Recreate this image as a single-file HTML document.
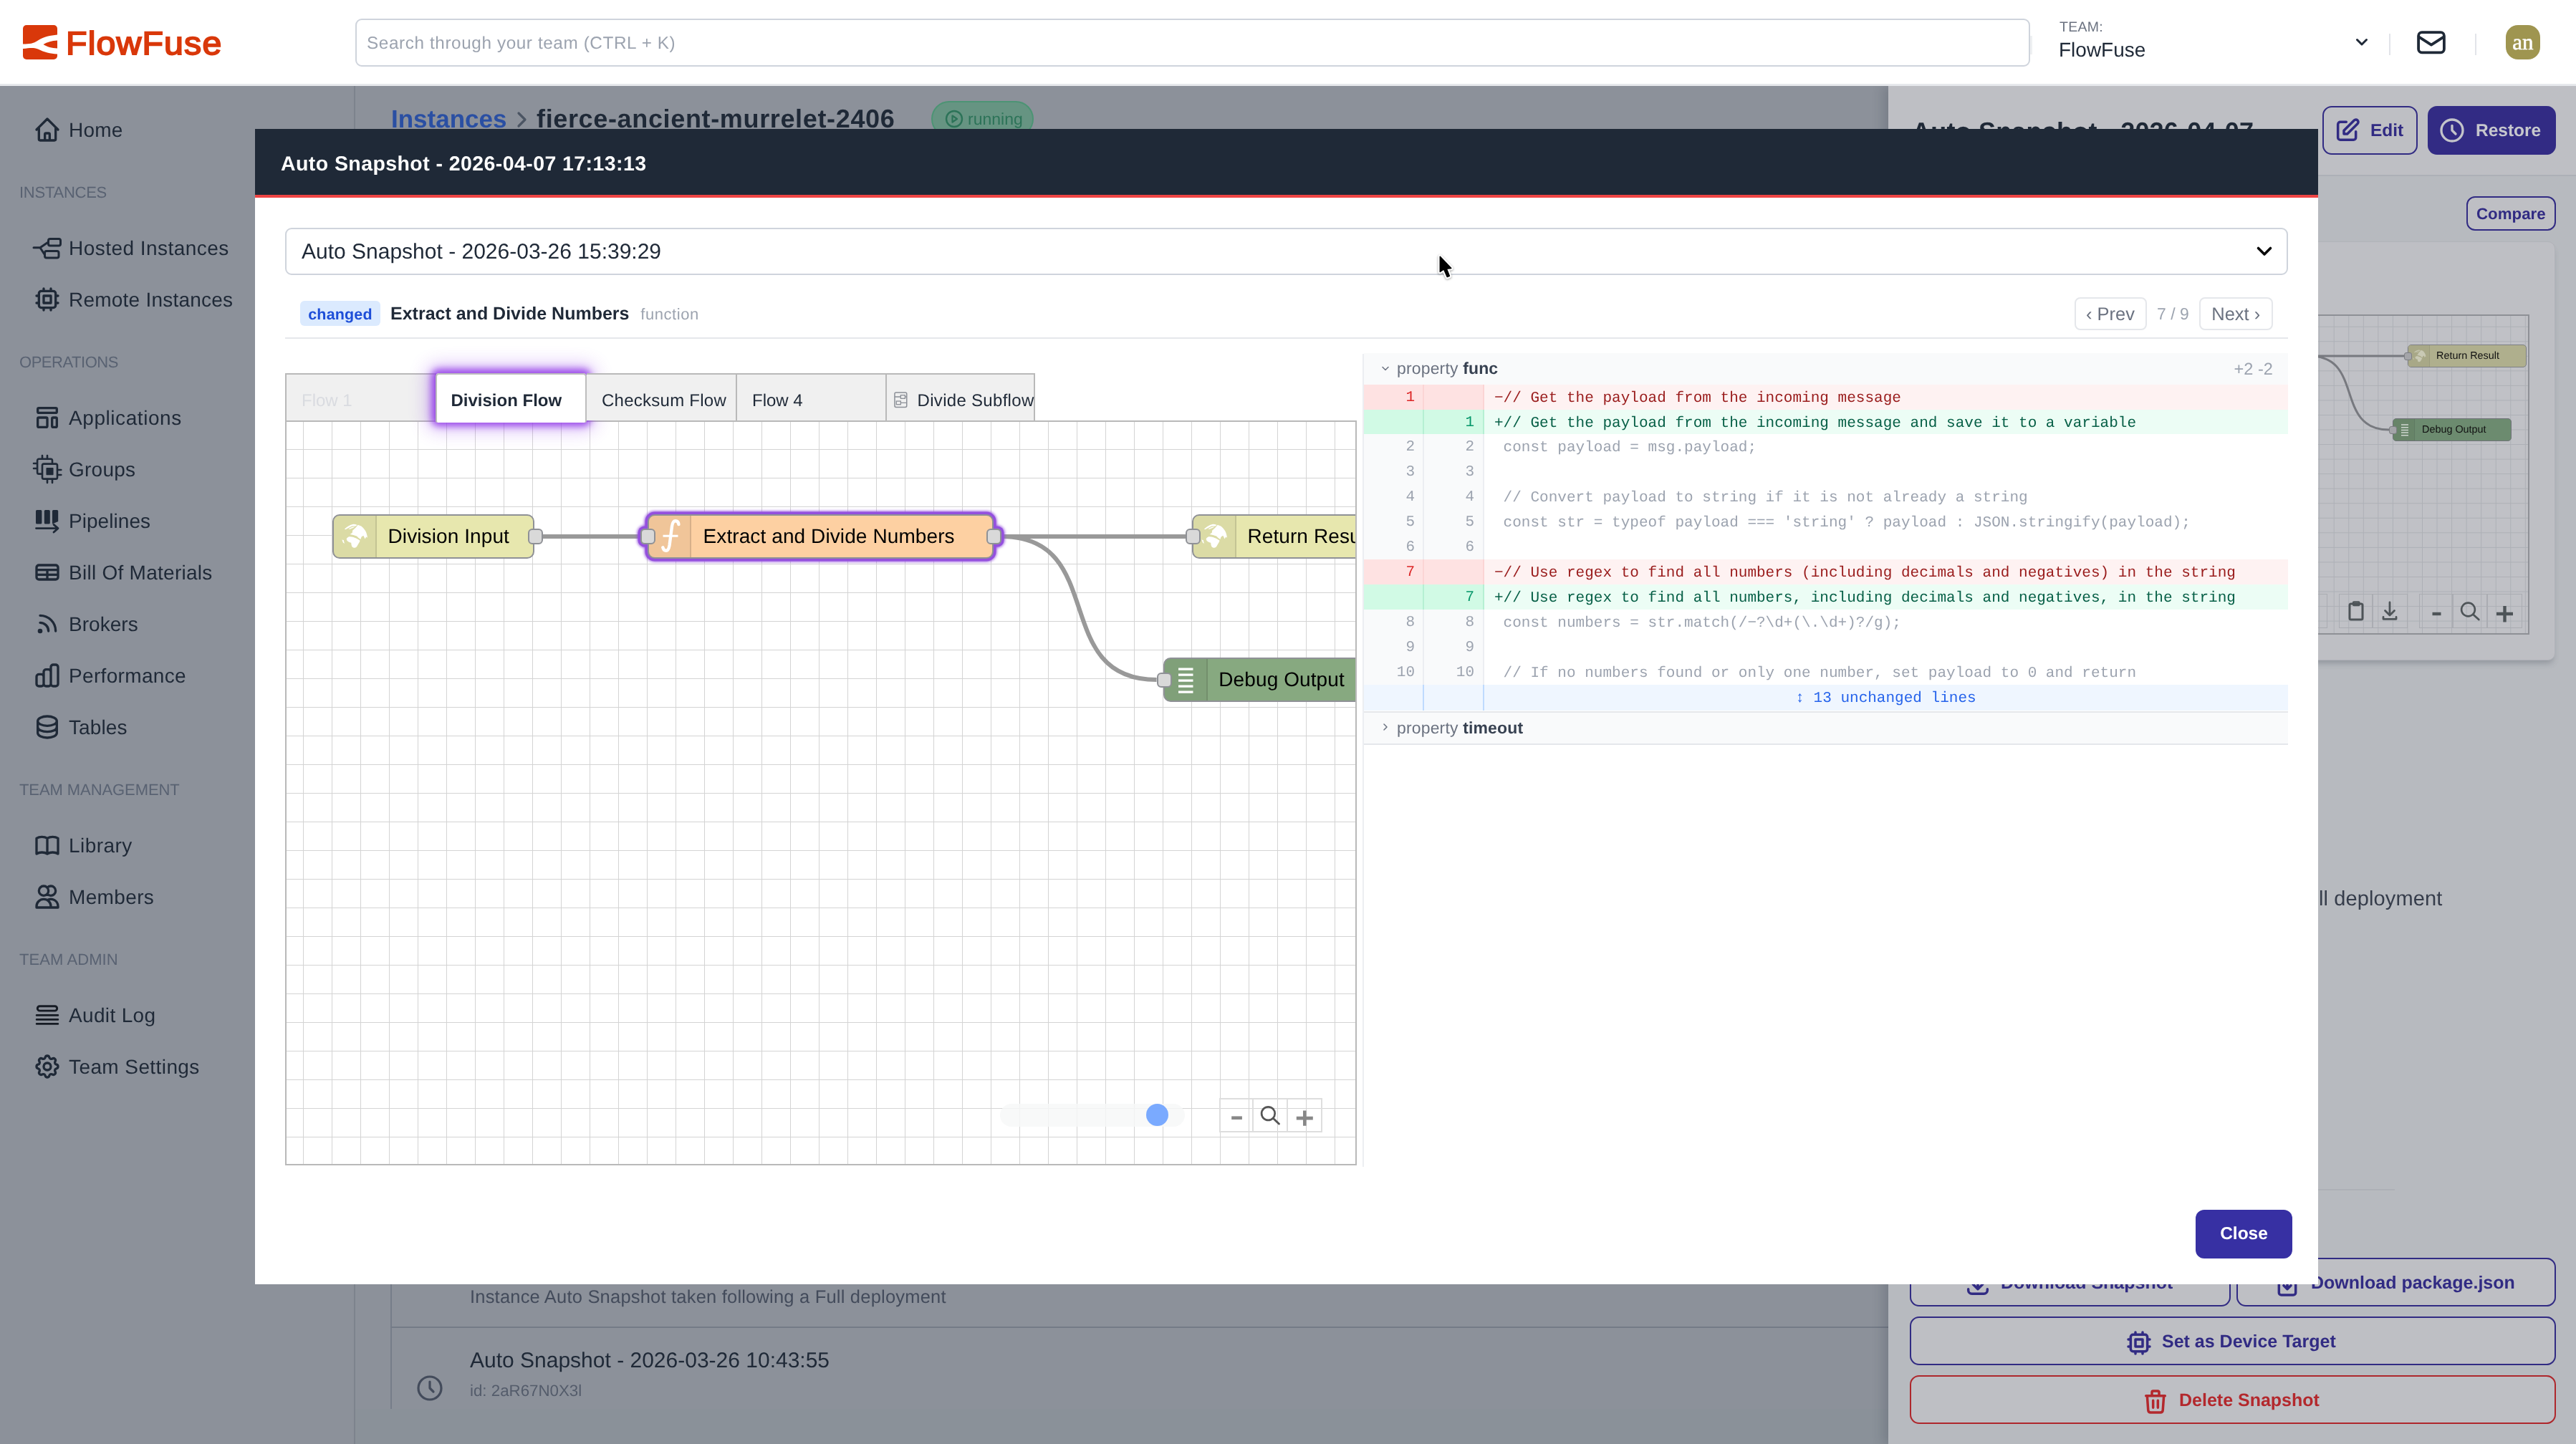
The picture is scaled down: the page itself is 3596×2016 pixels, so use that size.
<!DOCTYPE html>
<html>
<head>
<meta charset="utf-8">
<title>FlowFuse</title>
<style>
*{box-sizing:border-box;margin:0;padding:0}
html,body{width:3596px;height:2016px;overflow:hidden;background:#8c919a;text-rendering:geometricPrecision;font-family:"Liberation Sans",sans-serif;}
.abs{position:absolute}
.t{position:absolute;white-space:nowrap;line-height:1}
.b{font-weight:700}
svg{position:absolute;overflow:visible}
.mono{font-family:"Liberation Mono",monospace}
/* header */
#hdr{position:absolute;left:0;top:0;width:3596px;height:120px;background:#fff;border-bottom:3px solid #e6e8ec}
#search{position:absolute;left:496px;top:26px;width:2338px;height:67px;border:2px solid #cfd4dc;border-radius:9px;background:#fff}
/* sidebar */
#side{position:absolute;left:0;top:120px;width:496px;height:1896px;background:#8c919a;border-right:2px solid #7d838d}
.nav{position:absolute;left:96px;font-size:28px;color:#1f2937;white-space:nowrap;line-height:40px;height:40px;margin-top:.8px;letter-spacing:.3px}
.lbl{position:absolute;left:27px;font-size:22px;color:#596272;white-space:nowrap;line-height:30px;height:30px;margin-top:.5px;letter-spacing:0}
.ico{position:absolute;left:46px;width:40px;height:40px;fill:none;stroke:#1f2937;stroke-width:2;stroke-linecap:round;stroke-linejoin:round}
/* modal */
#modal{position:absolute;left:356px;top:180px;width:2880px;height:1613px;background:#fff;overflow:hidden}
#mhead{position:absolute;left:0;top:0;width:2880px;height:96px;background:#1f2937;border-bottom:4px solid #ef4444}
.tab{position:absolute;top:0;height:66px;background:#f0f0f0;border:2px solid #b9b9b9;border-left:none;border-bottom:none;font-size:24px;color:#1f2937;line-height:66px;padding-top:4px;white-space:nowrap}
.node{position:absolute;height:62px;border:2px solid #8f9196;border-radius:10px;overflow:hidden}
.node .ic{position:absolute;left:0;top:0;width:59.5px;height:58px;background:rgba(0,0,0,.05);border-right:2px solid rgba(0,0,0,.1)}
.node .lb{position:absolute;left:75px;top:0;line-height:58px;font-size:28px;color:#000;white-space:nowrap;letter-spacing:.1px}
.port{position:absolute;width:21.4px;height:21.4px;border:2px solid #8f9196;border-radius:6px;background:#d9d9d9}
.row{position:absolute;left:0;width:1290px;height:35px}
.row .n1{position:absolute;left:0;top:0;width:84px;height:100%;border-right:2px solid rgba(0,0,0,.05)}
.row .n2{position:absolute;left:84px;top:0;width:84.4px;height:100%;border-right:2px solid rgba(0,0,0,.05)}
.row .num{position:absolute;top:0;font-family:"Liberation Mono",monospace;font-size:21px;line-height:38px;text-align:right;white-space:pre}
.row .code{position:absolute;left:182px;top:0;font-family:"Liberation Mono",monospace;font-size:21.04px;line-height:38px;white-space:pre}
</style>
</head>
<body><div id="root" style="position:absolute;left:0;top:0;width:3596px;height:2016px;will-change:transform">
<!-- ======= dimmed main page content ======= -->
<div class="abs" style="left:0;top:120px;width:3596px;height:1896px;background:#8c919a"></div>
<!-- breadcrumb -->
<div class="t b" style="left:546px;top:149px;font-size:35px;color:#2a4fa3">Instances</div>
<svg style="left:718px;top:153px;width:22px;height:28px" viewBox="0 0 22 28"><path d="M6 5 L15 14 L6 23" fill="none" stroke="#4b5563" stroke-width="3.2" stroke-linecap="round" stroke-linejoin="round"/></svg>
<div class="t b" style="left:749px;top:148px;font-size:36px;letter-spacing:.65px;color:#1f2937">fierce-ancient-murrelet-2406</div>
<!-- running badge -->
<div class="abs" style="left:1300px;top:141px;width:143px;height:50px;border:2px solid #4c9474;border-radius:25px;background:#669482"></div>
<svg style="left:1318px;top:152px;width:28px;height:28px" viewBox="0 0 28 28"><circle cx="14" cy="14" r="11" fill="none" stroke="#2c7358" stroke-width="2.4"/><path d="M11.5 9.5 L18 14 L11.5 18.5 Z" fill="none" stroke="#2c7358" stroke-width="2.2" stroke-linejoin="round"/></svg>
<div class="t" style="left:1351px;top:155px;font-size:23px;color:#2c7358">running</div>

<!-- snapshot list under the modal -->
<div class="abs" style="left:545.2px;top:1700px;width:1.6px;height:267px;background:#767d89"></div>
<div class="t" style="left:656px;top:1799px;font-size:25.5px;letter-spacing:.2px;color:#434b5b">Instance Auto Snapshot taken following a Full deployment</div>
<div class="abs" style="left:545px;top:1851.5px;width:2091px;height:2px;background:#747b87"></div>
<div class="t" style="left:656px;top:1885px;font-size:30px;color:#1f2937">Auto Snapshot - 2026-03-26 10:43:55</div>
<div class="t" style="left:656px;top:1931px;font-size:22.3px;color:#545c6b">id: 2aR67N0X3l</div>
<svg style="left:581px;top:1919px;width:38px;height:38px" viewBox="0 0 38 38"><circle cx="19" cy="19" r="16" fill="none" stroke="#434b5b" stroke-width="3.2"/><path d="M19 10 V19 L24 24" fill="none" stroke="#434b5b" stroke-width="3.2" stroke-linecap="round" stroke-linejoin="round"/></svg>
<div class="abs" style="left:496px;top:1967px;width:2140px;height:49px;background:#8a9199"></div>
<!-- ======= header ======= -->
<div id="hdr" style="z-index:5">
  <!-- logo -->
  <svg style="left:32px;top:35px;width:48px;height:48px" viewBox="0 0 48 48">
    <rect x="0" y="0" width="48" height="48" rx="5" fill="#d9380a"/>
    <path d="M0 26.5 C10 26.5 14 26 21 21.5 C30 16 38 14.5 48 13.5 L48 21.5 C40 22 34 23.5 28.5 27 C34 30.5 40 32 48 32.5 L48 40.5 C38 40 30 38 21 33.5 C14 31 10 32 0 33 Z" fill="#fff"/>
    <path d="M48 22.8 C42 23.5 37 25 33.5 27 C37 29 42 30.5 48 31.2 Z" fill="#d9380a"/>
  </svg>
  <div class="t" style="left:92px;top:38px;font-size:45.5px;color:#d9380a;letter-spacing:1.1px;-webkit-text-stroke:1.9px #d9380a;transform:scaleX(1.06);transform-origin:0 0">FlowFuse</div>
  <div id="search"></div>
  <div class="t" style="left:512px;top:49px;font-size:24.3px;letter-spacing:.6px;color:#9ca3af">Search through your team (CTRL + K)</div>
  <div class="abs" style="left:2834px;top:50px;width:3px;height:26px;background:#eef0f2"></div>
  <div class="t" style="left:2875px;top:29px;font-size:19.5px;letter-spacing:.25px;color:#6b7280">TEAM:</div>
  <div class="t" style="left:2874px;top:56px;font-size:28px;color:#1f2937">FlowFuse</div>
  <svg style="left:3287px;top:50px;width:20px;height:18px" viewBox="0 0 20 18"><path d="M3.5 5.5 L10 12 L16.5 5.5" fill="none" stroke="#1f2937" stroke-width="3" stroke-linecap="round" stroke-linejoin="round"/></svg>
  <div class="abs" style="left:3334.5px;top:47px;width:2px;height:30px;background:#e2e4e9"></div>
  <div class="abs" style="left:3454.5px;top:47px;width:2px;height:30px;background:#e2e4e9"></div>
  <!-- mail -->
  <svg style="left:3374px;top:42.5px;width:40px;height:32.5px" viewBox="0 0 42 34"><rect x="2.2" y="2.2" width="37.6" height="29.6" rx="5" fill="none" stroke="#1f2937" stroke-width="4"/><path d="M3 9 L21 20.5 L39 9" fill="none" stroke="#1f2937" stroke-width="4" stroke-linejoin="round"/></svg>
  <!-- avatar -->
  <div class="abs" style="left:3498px;top:35px;width:48px;height:48px;border-radius:17px;background:#9f9550"></div>
  <div class="t" style="left:3498px;top:42.5px;width:48px;text-align:center;font-family:'Liberation Serif',serif;font-size:31px;color:#fff;-webkit-text-stroke:.55px #fff">an</div>
</div>
<!-- ======= sidebar ======= -->
<div id="side">
<div class="nav" style="top:41px;letter-spacing:0.17px">Home</div>
<svg class="ico" style="top:41px" viewBox="0 0 24 24"><path d="M3 12l2-2m0 0l7-7 7 7M5 10v10a1 1 0 001 1h3m10-11l2 2m-2-2v10a1 1 0 01-1 1h-3m-6 0a1 1 0 001-1v-4a1 1 0 011-1h2a1 1 0 011 1v4a1 1 0 001 1m-6 0h6"/></svg>
<div class="lbl" style="top:133px;letter-spacing:-0.25px">INSTANCES</div>
<div class="nav" style="top:206px;letter-spacing:0.46px">Hosted Instances</div>
<svg class="ico" style="top:206px" viewBox="0 0 40 40"><g stroke-width="3"><path d="M1 19.7 H10 M10 19.7 L16 29 M10 19.7 L21 12.3"/><rect x="21.5" y="7.5" width="17" height="9.6" rx="2.5"/><rect x="16.5" y="24.5" width="19.5" height="9.6" rx="2.5"/></g></svg>
<div class="nav" style="top:278px;letter-spacing:0.23px">Remote Instances</div>
<svg class="ico" style="top:278px" viewBox="0 0 24 24"><path d="M9 3v2m6-2v2M9 19v2m6-2v2M5 9H3m2 6H3m18-6h-2m2 6h-2M7 19h10a2 2 0 002-2V7a2 2 0 00-2-2H7a2 2 0 00-2 2v10a2 2 0 002 2zM9 9h6v6H9V9z"/></svg>
<div class="lbl" style="top:370px;letter-spacing:-0.46px">OPERATIONS</div>
<div class="nav" style="top:443px;letter-spacing:0.57px">Applications</div>
<svg class="ico" style="top:443px" viewBox="0 0 24 24"><path d="M4 5a1 1 0 011-1h14a1 1 0 011 1v2a1 1 0 01-1 1H5a1 1 0 01-1-1V5zM4 13a1 1 0 011-1h6a1 1 0 011 1v6a1 1 0 01-1 1H5a1 1 0 01-1-1v-6zM16 13a1 1 0 011-1h2a1 1 0 011 1v6a1 1 0 01-1 1h-2a1 1 0 01-1-1v-6z"/></svg>
<div class="nav" style="top:515px;letter-spacing:0.25px">Groups</div>
<svg class="ico" style="top:515px" viewBox="0 0 40 40"><g stroke-width="2.6"><path d="M11.7 26.6 H8.3 a2.2 2.2 0 0 1 -2.2 -2.2 V7.9 a2.2 2.2 0 0 1 2.2 -2.2 H24.8 a2.2 2.2 0 0 1 2.2 2.2 V11.3"/><rect x="13" y="12.6" width="21" height="21" rx="2.2"/><rect x="19.2" y="18.8" width="8.6" height="8.6" fill="#1f2937" stroke-width="1.5"/><path d="M13 1 V5.5 M20 1 V5.5 M1 12 H5.8 M1 19 H5.8 M20 34 V39 M27 34 V39 M34.5 21 H39.3 M34.5 28 H39.3"/></g></svg>
<div class="nav" style="top:587px;letter-spacing:0.05px">Pipelines</div>
<svg class="ico" style="top:587px" viewBox="0 0 40 40"><g><rect x="4" y="5" width="8.4" height="19.5" rx="1.6" fill="#1f2937" stroke="none"/><rect x="15.8" y="5" width="8" height="19.5" rx="1.6" fill="#1f2937" stroke="none"/><path d="M27 6.6 a1.6 1.6 0 0 1 1.6 -1.6 h5 a1.6 1.6 0 0 1 1.6 1.6 v14.4 l-8.2 3.5 z" fill="#1f2937" stroke="none"/><path d="M4.5 30.6 H34.5 M29 25.4 L35 30.6 L29 36" stroke-width="2.8"/></g></svg>
<div class="nav" style="top:659px;letter-spacing:0.27px">Bill Of Materials</div>
<svg class="ico" style="top:659px" viewBox="0 0 24 24"><path d="M3 10h18M3 14h18m-9-4v8m-7 0h14a2 2 0 002-2V8a2 2 0 00-2-2H5a2 2 0 00-2 2v8a2 2 0 002 2z"/></svg>
<div class="nav" style="top:731px;letter-spacing:0.03px">Brokers</div>
<svg class="ico" style="top:731px" viewBox="0 0 24 24"><path d="M6 5c7.18 0 13 5.82 13 13M6 11a7 7 0 017 7m-6 0a1 1 0 11-2 0 1 1 0 012 0z"/></svg>
<div class="nav" style="top:803px;letter-spacing:0.34px">Performance</div>
<svg class="ico" style="top:803px" viewBox="0 0 24 24"><path d="M9 19v-6a2 2 0 00-2-2H5a2 2 0 00-2 2v6a2 2 0 002 2h2a2 2 0 002-2zm0 0V9a2 2 0 012-2h2a2 2 0 012 2v10m-6 0a2 2 0 002 2h2a2 2 0 002-2m0 0V5a2 2 0 012-2h2a2 2 0 012 2v14a2 2 0 01-2 2h-2a2 2 0 01-2-2z"/></svg>
<div class="nav" style="top:875px;letter-spacing:0.1px">Tables</div>
<svg class="ico" style="top:875px" viewBox="0 0 24 24"><path d="M4 7v10c0 2.21 3.582 4 8 4s8-1.79 8-4V7M4 7c0 2.21 3.582 4 8 4s8-1.79 8-4M4 7c0-2.21 3.582-4 8-4s8 1.79 8 4m0 5c0 2.21-3.582 4-8 4s-8-1.79-8-4"/></svg>
<div class="lbl" style="top:967px;letter-spacing:-0.08px">TEAM MANAGEMENT</div>
<div class="nav" style="top:1040px;letter-spacing:0.43px">Library</div>
<svg class="ico" style="top:1040px" viewBox="0 0 24 24"><path d="M12 6.253v13m0-13C10.832 5.477 9.246 5 7.5 5S4.168 5.477 3 6.253v13C4.168 18.477 5.754 18 7.5 18s3.332.477 4.5 1.253m0-13C13.168 5.477 14.754 5 16.5 5c1.747 0 3.332.477 4.5 1.253v13C19.832 18.477 18.247 18 16.5 18c-1.746 0-3.332.477-4.5 1.253"/></svg>
<div class="nav" style="top:1112px;letter-spacing:0.36px">Members</div>
<svg class="ico" style="top:1112px" viewBox="0 0 24 24"><path d="M12 4.354a4 4 0 110 5.292M15 21H3v-1a6 6 0 0112 0v1zm0 0h6v-1a6 6 0 00-9-5.197M13 7a4 4 0 11-8 0 4 4 0 018 0z"/></svg>
<div class="lbl" style="top:1204px;letter-spacing:0.09px">TEAM ADMIN</div>
<div class="nav" style="top:1277px;letter-spacing:0.35px">Audit Log</div>
<svg class="ico" style="top:1277px" viewBox="0 0 40 40"><g stroke-width="2.9" stroke="#161b24"><rect x="6.3" y="7.7" width="27.4" height="6.4" rx="3.2"/><path d="M5.2 20.4 H34.8 M5.2 26.4 H34.8 M5.2 32.4 H34.8"/></g></svg>
<div class="nav" style="top:1349px;letter-spacing:0.41px">Team Settings</div>
<svg class="ico" style="top:1349px" viewBox="0 0 24 24"><path d="M10.325 4.317c.426-1.756 2.924-1.756 3.35 0a1.724 1.724 0 002.573 1.066c1.543-.94 3.31.826 2.37 2.37a1.724 1.724 0 001.065 2.572c1.756.426 1.756 2.924 0 3.35a1.724 1.724 0 00-1.066 2.573c.94 1.543-.826 3.31-2.37 2.37a1.724 1.724 0 00-2.572 1.065c-.426 1.756-2.924 1.756-3.35 0a1.724 1.724 0 00-2.573-1.066c-1.543.94-3.31-.826-2.37-2.37a1.724 1.724 0 00-1.065-2.572c-1.756-.426-1.756-2.924 0-3.35a1.724 1.724 0 001.066-2.573c-.94-1.543.826-3.31 2.37-2.37.996.608 2.296.07 2.572-1.065z"/><path d="M15 12a3 3 0 11-6 0 3 3 0 016 0z"/></svg>
</div>
<!-- ======= right drawer (dimmed) ======= -->
<div id="drawer" class="abs" style="left:2636px;top:120px;width:960px;height:1896px;background:#b7babf;box-shadow:-8px 0 14px rgba(40,45,60,.18)">
  <div class="abs" style="left:0;top:0;width:960px;height:126.2px;background:#bebfc4;border-bottom:2px solid #adb0b7"></div>
</div>
<div class="t b" style="left:2669px;top:165.5px;font-size:36px;letter-spacing:.2px;color:#1f2937">Auto Snapshot - 2026-04-07</div>
<!-- Edit -->
<div class="abs" style="left:3242px;top:148px;width:133px;height:68px;border:2.5px solid #312b83;border-radius:13px;background:#bebfc4"></div>
<svg style="left:3256.5px;top:162px;width:40px;height:40px;fill:none;stroke:#312b83;stroke-width:2.1;stroke-linecap:round;stroke-linejoin:round" viewBox="0 0 24 24"><path d="M11 5H6a2 2 0 00-2 2v11a2 2 0 002 2h11a2 2 0 002-2v-5m-1.414-9.414a2 2 0 112.828 2.828L11.828 15H9v-2.828l8.586-8.586z"/></svg>
<div class="t b" style="left:3309px;top:171.2px;font-size:24.5px;color:#312b83">Edit</div>
<!-- Restore -->
<div class="abs" style="left:3389px;top:148px;width:179px;height:68px;background:#322b84;border-radius:13px"></div>
<svg style="left:3403px;top:162px;width:40px;height:40px;fill:none;stroke:#c3c4ca;stroke-width:2;stroke-linecap:round;stroke-linejoin:round" viewBox="0 0 24 24"><path d="M12 8v4l3 3m6-3a9 9 0 11-18 0 9 9 0 0118 0z"/></svg>
<div class="t b" style="left:3456px;top:171.2px;font-size:24.5px;color:#c6c7cd">Restore</div>
<!-- Compare -->
<div class="abs" style="left:3443px;top:274px;width:125px;height:48px;border:2.5px solid #312b83;border-radius:12px;background:#bebfc4"></div>
<div class="t b" style="left:3457px;top:288px;font-size:22.3px;color:#312b83">Compare</div>
<!-- preview card -->
<div class="abs" style="left:2666px;top:337px;width:901px;height:585px;background:#bebfc4;border:1.5px solid #b1b3b9;border-radius:10px;box-shadow:0 7px 9px -3px rgba(60,65,80,.3)"></div>
<div class="abs" style="left:2703px;top:439px;width:828px;height:447px;border:2px solid #8e9096;background-color:#c0c1c6;background-image:linear-gradient(to right,#adb0b6 1px,transparent 1px),linear-gradient(to bottom,#adb0b6 1px,transparent 1px);background-size:20.56px 20.56px;background-position:18.5px 14.7px"></div>
<svg style="left:0;top:0;width:3596px;height:2016px;pointer-events:none" viewBox="0 0 3596 2016"><path d="M3224 497 H3357 M3224 497 C3301 497 3258 600 3335 600" fill="none" stroke="#77797f" stroke-width="3"/></svg>
<!-- preview nodes -->
<div class="abs" style="left:3361px;top:481px;width:166px;height:32px;background:#afaf8d;border:1px solid #7d7f84;border-radius:5px"></div>
<div class="abs" style="left:3362px;top:482px;width:30px;height:30px;background:#a8a887;border-right:1px solid #9c9c7e;border-radius:4px 0 0 4px"></div>
<svg style="left:3367.5px;top:487.5px;width:18.5px;height:18.5px" viewBox="0 0 36 36"><g fill="#c9c9b4"><path d="M15.1 9.7 L19.4 5.8 L22.5 1.9 C24.5 2.3 26 2.9 27.2 3.5 C29 4.8 30.6 6.4 31.8 8.2 C33.3 10.2 34.3 12.2 34.9 14.4 C35.5 16.2 35.8 18 35.9 19.8 L34.2 18.6 L32.6 21.4 L30.3 16.7 L27.6 18.6 L26.4 22.1 L23.3 19.8 L21 17.5 L16.3 15.9 L11.6 15.1 L14.8 12.8 Z"/><path d="M7 20.6 C8 19.4 9 18.6 10.1 18.2 C12 18 14.5 18.3 16.3 19 L20.2 20.6 C22 21.4 24 22.5 25.6 23.7 C25 25.4 24.2 26.9 23.3 28.3 C22.6 29.7 21.8 31 21 32.2 C19.8 33.2 18.5 33.8 17.1 33.8 C15.8 33.4 14.7 32.6 14 31.4 C13.6 30 13.3 28.4 13.2 26.8 C11.8 26.6 10.5 26 9.3 25.2 C8.3 24.6 7.5 23.8 7 22.9 C6.8 22.1 6.8 21.3 7 20.6 Z"/><path d="M3.9 7.8 C5.4 6.1 7.2 4.7 9.3 3.5 C11.5 2.3 13.8 1.3 16.3 0.8 C18.2 0.8 20 1.2 21.7 1.9 L19.4 3.5 L14.8 3.5 C13 4.2 11.5 5 10.1 5.8 C8.4 6.7 6.9 7.5 5.4 8.2 Z"/><path d="M9.3 7.4 C11 6.3 12.8 5.4 14.8 4.7 L18.6 4.3 L16.3 5.8 C14.6 6.4 13 7.1 11.6 7.8 Z"/><path d="M0.4 22.5 L2.7 22.9 L3.9 28 L1.9 26.4 Z"/></g></svg>
<div class="t" style="left:3401px;top:490px;font-size:14.4px;color:#111">Return Result</div>
<div class="abs" style="left:3356px;top:492px;width:11px;height:11px;background:#a4a5a9;border:1px solid #7d7f84;border-radius:3px"></div>
<div class="abs" style="left:3340px;top:584px;width:166px;height:32px;background:#6c8b6f;border:1px solid #6f7278;border-radius:5px"></div>
<div class="abs" style="left:3341px;top:585px;width:30px;height:30px;background:#678468;border-right:1px solid #5f7a62;border-radius:4px 0 0 4px"></div>
<svg style="left:3351px;top:592px;width:12px;height:17px" viewBox="0 0 12 17"><path d="M1 1H11M1 4.7H11M1 8.4H11M1 12.1H11M1 15.8H11" stroke="#cfd6cf" stroke-width="1.5"/></svg>
<div class="t" style="left:3381px;top:593px;font-size:14.4px;color:#111">Debug Output</div>
<div class="abs" style="left:3335px;top:595px;width:11px;height:11px;background:#a4a5a9;border:1px solid #7d7f84;border-radius:3px"></div>
<!-- preview controls -->
<div class="abs" style="left:3150px;top:829px;width:99px;height:48px;border:1.5px solid #aaacb2"></div>
<div class="abs" style="left:3265px;top:829px;width:96px;height:48px;border:1.5px solid #aaacb2"></div>
<div class="abs" style="left:3311px;top:829px;width:1.5px;height:48px;background:#aaacb2"></div>
<div class="abs" style="left:3377px;top:829px;width:144px;height:48px;border:1.5px solid #aaacb2"></div>
<div class="abs" style="left:3423px;top:829px;width:1.5px;height:48px;background:#aaacb2"></div>
<div class="abs" style="left:3471px;top:829px;width:1.5px;height:48px;background:#aaacb2"></div>
<svg style="left:3236px;top:820px;width:300px;height:70px;fill:none;stroke:#4e5458;stroke-linecap:round;stroke-linejoin:round" viewBox="3236 820 300 70">
  <rect x="3280" y="843" width="18" height="22" rx="2" stroke-width="3"/><rect x="3285" y="840.5" width="8.5" height="4.5" rx="1" stroke-width="2.4"/>
  <path d="M3336 841 V858.5 M3329.5 852.5 L3336 859 L3342.5 852.5 M3327 861.5 V864.3 H3345 V861.5" stroke-width="2.8"/>
  <path d="M3395.5 857 H3407.5" stroke-width="4.4" stroke-linecap="butt"/>
  <circle cx="3445.5" cy="851" r="9.4" stroke-width="2.6"/><path d="M3452.3 857.7 L3460.3 865" stroke-width="2.8"/>
  <path d="M3485 857 H3508 M3496.5 846 V868.5" stroke-width="4.4" stroke-linecap="butt"/>
</svg>
<!-- description text -->
<div class="t" style="left:3237px;top:1240.5px;font-size:29px;letter-spacing:.12px;color:#363d4b">ll deployment</div>
<div class="abs" style="left:2666px;top:1660px;width:677px;height:2px;background:#adb0b6"></div>
<!-- drawer buttons -->
<div class="abs" style="left:2666px;top:1756px;width:448px;height:68px;border:2.5px solid #312b83;border-radius:13px;background:#bebfc4"></div>
<svg style="left:2741px;top:1773px;width:40px;height:40px;fill:none;stroke:#312b83;stroke-width:2.1;stroke-linecap:round;stroke-linejoin:round" viewBox="0 0 24 24"><path d="M4 16v1a3 3 0 003 3h10a3 3 0 003-3v-1m-4-4l-4 4m0 0l-4-4m4 4V4"/></svg>
<div class="t b" style="left:2793px;top:1779px;font-size:25px;color:#312b83">Download Snapshot</div>
<div class="abs" style="left:3122px;top:1756px;width:446px;height:68px;border:2.5px solid #312b83;border-radius:13px;background:#bebfc4"></div>
<svg style="left:3173px;top:1772.5px;width:40px;height:40px;fill:none;stroke:#312b83;stroke-width:2.1;stroke-linecap:round;stroke-linejoin:round" viewBox="0 0 24 24"><path d="M12 10v6m0 0l-3-3m3 3l3-3m2 8H7a2 2 0 01-2-2V5a2 2 0 012-2h5.586a1 1 0 01.707.293l5.414 5.414a1 1 0 01.293.707V19a2 2 0 01-2 2z"/></svg>
<div class="t b" style="left:3226px;top:1779px;font-size:25px;color:#312b83">Download package.json</div>
<div class="abs" style="left:2666px;top:1838px;width:902px;height:68px;border:2.5px solid #312b83;border-radius:13px;background:#bebfc4"></div>
<svg style="left:2966px;top:1854.5px;width:40px;height:40px;fill:none;stroke:#312b83;stroke-width:2.1;stroke-linecap:round;stroke-linejoin:round" viewBox="0 0 24 24"><path d="M9 3v2m6-2v2M9 19v2m6-2v2M5 9H3m2 6H3m18-6h-2m2 6h-2M7 19h10a2 2 0 002-2V7a2 2 0 00-2-2H7a2 2 0 00-2 2v10a2 2 0 002 2zM9 9h6v6H9V9z"/></svg>
<div class="t b" style="left:3018px;top:1861px;font-size:25px;color:#312b83">Set as Device Target</div>
<div class="abs" style="left:2666px;top:1920px;width:902px;height:68px;border:2.5px solid #ae272c;border-radius:13px;background:#bebfc4"></div>
<svg style="left:2989px;top:1937px;width:40px;height:40px;fill:none;stroke:#b3282d;stroke-width:2.1;stroke-linecap:round;stroke-linejoin:round" viewBox="0 0 24 24"><path d="M19 7l-.867 12.142A2 2 0 0116.138 21H7.862a2 2 0 01-1.995-1.858L5 7m5 4v6m4-6v6m1-10V4a1 1 0 00-1-1h-4a1 1 0 00-1 1v3M4 7h16"/></svg>
<div class="t b" style="left:3042px;top:1943px;font-size:25px;color:#b3282d">Delete Snapshot</div>
<!-- ======= modal ======= -->
<div id="modal">
  <div id="mhead"></div>
  <div id="mwrap" class="abs" style="left:0;top:-1px;width:2880px;height:1614px">
  <div class="t b" style="left:36px;top:35.6px;font-size:28.5px;letter-spacing:.42px;color:#fff">Auto Snapshot - 2026-04-07 17:13:13</div>
  <!-- select -->
  <div class="abs" style="left:42px;top:139px;width:2795.6px;height:66px;border:2px solid #cfd4dc;border-radius:9px"></div>
  <div class="t" style="left:65px;top:158px;font-size:30px;color:#1f2937">Auto Snapshot - 2026-03-26 15:39:29</div>
  <svg style="left:2793px;top:162px;width:24px;height:20px" viewBox="0 0 24 20"><path d="M3.5 5.5 L12 14 L20.5 5.5" fill="none" stroke="#0b0b0b" stroke-width="3.6" stroke-linecap="round" stroke-linejoin="round"/></svg>
  <!-- change header row -->
  <div class="abs" style="left:63px;top:241px;width:112px;height:35px;background:#dbeafe;border-radius:6px"></div>
  <div class="t b" style="left:63px;top:250px;width:112px;text-align:center;font-size:21.5px;letter-spacing:.15px;color:#1d4ed8">changed</div>
  <div class="t b" style="left:189px;top:246.5px;font-size:25px;color:#1f2937">Extract and Divide Numbers</div>
  <div class="t" style="left:538.3px;top:249px;font-size:22px;letter-spacing:.55px;color:#9ca3af">function</div>
  <div class="abs" style="left:2539.6px;top:236px;width:101px;height:46px;border:2px solid #e5e7eb;border-radius:8px"></div>
  <div class="t" style="left:2540px;top:248px;width:100px;text-align:center;font-size:25.5px;color:#6b7280">&#8249; Prev</div>
  <div class="t" style="left:2655px;top:248px;font-size:23px;color:#9ca3af">7 / 9</div>
  <div class="abs" style="left:2713.6px;top:236px;width:103px;height:46px;border:2px solid #e5e7eb;border-radius:8px"></div>
  <div class="t" style="left:2714px;top:248px;width:102.5px;text-align:center;font-size:25.5px;color:#6b7280">Next &#8250;</div>
  <div class="abs" style="left:42px;top:292px;width:2796px;height:2px;background:#e5e7eb"></div>

  <!-- flow canvas -->
  <div id="canvas" class="abs" style="left:42px;top:408px;width:1496px;height:1040px;border:2px solid #b9b9b9;overflow:hidden;background-color:#fff;background-image:linear-gradient(to right,#d4d4d4 1px,transparent 1px),linear-gradient(to bottom,#d4d4d4 1px,transparent 1px);background-size:40px 40px;background-position:23px 38px">
    <svg style="left:0;top:0;width:1492px;height:1035px" viewBox="0 0 1492 1035"><path d="M357 160 H494 M998 160 H1255 M998 160 C1148 160 1064.5 360 1214.5 360" fill="none" stroke="#999" stroke-width="6"/></svg>
    <!-- Division Input -->
    <div class="node" style="left:64px;top:129px;width:282px;background:#e7e7ae"><div class="ic"></div><div class="lb" style="left:75.5px">Division Input</div>
      <svg style="left:11px;top:10.7px;width:36px;height:36px" viewBox="0 0 36 36"><g fill="#fff"><path d="M15.1 9.7 L19.4 5.8 L22.5 1.9 C24.5 2.3 26 2.9 27.2 3.5 C29 4.8 30.6 6.4 31.8 8.2 C33.3 10.2 34.3 12.2 34.9 14.4 C35.5 16.2 35.8 18 35.9 19.8 L34.2 18.6 L32.6 21.4 L30.3 16.7 L27.6 18.6 L26.4 22.1 L23.3 19.8 L21 17.5 L16.3 15.9 L11.6 15.1 L14.8 12.8 Z"/><path d="M7 20.6 C8 19.4 9 18.6 10.1 18.2 C12 18 14.5 18.3 16.3 19 L20.2 20.6 C22 21.4 24 22.5 25.6 23.7 C25 25.4 24.2 26.9 23.3 28.3 C22.6 29.7 21.8 31 21 32.2 C19.8 33.2 18.5 33.8 17.1 33.8 C15.8 33.4 14.7 32.6 14 31.4 C13.6 30 13.3 28.4 13.2 26.8 C11.8 26.6 10.5 26 9.3 25.2 C8.3 24.6 7.5 23.8 7 22.9 C6.8 22.1 6.8 21.3 7 20.6 Z"/><path d="M3.9 7.8 C5.4 6.1 7.2 4.7 9.3 3.5 C11.5 2.3 13.8 1.3 16.3 0.8 C18.2 0.8 20 1.2 21.7 1.9 L19.4 3.5 L14.8 3.5 C13 4.2 11.5 5 10.1 5.8 C8.4 6.7 6.9 7.5 5.4 8.2 Z"/><path d="M9.3 7.4 C11 6.3 12.8 5.4 14.8 4.7 L18.6 4.3 L16.3 5.8 C14.6 6.4 13 7.1 11.6 7.8 Z"/><path d="M0.4 22.5 L2.7 22.9 L3.9 28 L1.9 26.4 Z"/></g></svg></div>
    <div class="port" style="left:337px;top:149.2px"></div>
    <!-- function -->
    <div class="abs" style="left:503.5px;top:129px;width:483px;height:62px;border-radius:10px;background:#9450de;box-shadow:0 0 0 3.6px #9450de,0 0 3.5px 5px rgba(148,80,222,.72)"></div>
    <div class="port" style="left:494px;top:149.2px;box-shadow:0 0 0 3.6px #9450de,0 0 3.5px 5px rgba(148,80,222,.72)"></div>
    <div class="port" style="left:977px;top:149.2px;box-shadow:0 0 0 3.6px #9450de,0 0 3.5px 5px rgba(148,80,222,.72)"></div>
    <div class="node" style="left:503.5px;top:129px;width:483px;background:#fdd0a2"><div class="ic"></div><div class="lb" style="left:76px">Extract and Divide Numbers</div>
      <svg style="left:-2px;top:-2px;width:62px;height:62px" viewBox="0 0 62 62"><path d="M43.4 14 C43 10.6 41.3 9.2 39 9.2 C35.8 9.2 34.6 12.5 34 17 L30.6 43 C29.8 48.2 28.2 50.8 25.8 50.8 C23.4 50.8 21.9 49 21.3 46.3" fill="none" stroke="#fff" stroke-width="4.4" stroke-linecap="round"/><path d="M21.5 30.2 H42.5" stroke="#fff" stroke-width="3.1" fill="none"/></svg></div>
    <div class="port" style="left:494px;top:149.2px"></div>
    <div class="port" style="left:977px;top:149.2px"></div>
    <!-- Return Result -->
    <div class="node" style="left:1264.4px;top:129px;width:300px;background:#e7e7ae"><div class="ic"></div><div class="lb" style="left:75px">Return Result</div>
      <svg style="left:11px;top:10.7px;width:36px;height:36px" viewBox="0 0 36 36"><g fill="#fff"><path d="M15.1 9.7 L19.4 5.8 L22.5 1.9 C24.5 2.3 26 2.9 27.2 3.5 C29 4.8 30.6 6.4 31.8 8.2 C33.3 10.2 34.3 12.2 34.9 14.4 C35.5 16.2 35.8 18 35.9 19.8 L34.2 18.6 L32.6 21.4 L30.3 16.7 L27.6 18.6 L26.4 22.1 L23.3 19.8 L21 17.5 L16.3 15.9 L11.6 15.1 L14.8 12.8 Z"/><path d="M7 20.6 C8 19.4 9 18.6 10.1 18.2 C12 18 14.5 18.3 16.3 19 L20.2 20.6 C22 21.4 24 22.5 25.6 23.7 C25 25.4 24.2 26.9 23.3 28.3 C22.6 29.7 21.8 31 21 32.2 C19.8 33.2 18.5 33.8 17.1 33.8 C15.8 33.4 14.7 32.6 14 31.4 C13.6 30 13.3 28.4 13.2 26.8 C11.8 26.6 10.5 26 9.3 25.2 C8.3 24.6 7.5 23.8 7 22.9 C6.8 22.1 6.8 21.3 7 20.6 Z"/><path d="M3.9 7.8 C5.4 6.1 7.2 4.7 9.3 3.5 C11.5 2.3 13.8 1.3 16.3 0.8 C18.2 0.8 20 1.2 21.7 1.9 L19.4 3.5 L14.8 3.5 C13 4.2 11.5 5 10.1 5.8 C8.4 6.7 6.9 7.5 5.4 8.2 Z"/><path d="M9.3 7.4 C11 6.3 12.8 5.4 14.8 4.7 L18.6 4.3 L16.3 5.8 C14.6 6.4 13 7.1 11.6 7.8 Z"/><path d="M0.4 22.5 L2.7 22.9 L3.9 28 L1.9 26.4 Z"/></g></svg></div>
    <div class="port" style="left:1254.5px;top:149.2px"></div>
    <!-- Debug Output -->
    <div class="node" style="left:1224.3px;top:329px;width:300px;background:#87a980"><div class="ic"></div><div class="lb" style="left:75px">Debug Output</div>
      <svg style="left:18.5px;top:10.8px;width:20.5px;height:38px" viewBox="0 0 20.5 38"><path d="M0 3.1H20.5M0 11.1H20.5M0 19.1H20.5M0 27.1H20.5M0 35.1H20.5" stroke="#fff" stroke-width="3.3"/></svg></div>
    <div class="port" style="left:1214.5px;top:349.5px"></div>
    <!-- zoom slider + buttons -->
    <div class="abs" style="left:995.7px;top:951.5px;width:258.5px;height:32.3px;border-radius:16.2px;background:rgba(247,248,248,.84)"></div>
    <div class="abs" style="left:1199.5px;top:952.4px;width:31px;height:31px;border-radius:50%;background:rgba(104,158,255,.88)"></div>
    <div class="abs" style="left:1302.2px;top:944px;width:143.6px;height:47.8px;border:2px solid #dedede"></div>
    <div class="abs" style="left:1348px;top:944px;width:2px;height:47.8px;background:#dedede"></div>
    <div class="abs" style="left:1396px;top:944px;width:2px;height:47.8px;background:#dedede"></div>
    <svg style="left:1302px;top:944px;width:144px;height:48px;fill:none;stroke:#888;stroke-linecap:round" viewBox="0 0 144 48">
      <path d="M17.2 27.7 H31.9" stroke-width="4.6" stroke-linecap="butt"/>
      <circle cx="68.4" cy="21.6" r="9.3" stroke-width="2.7" stroke="#555"/><path d="M75.2 28.2 L83.4 36" stroke-width="2.9" stroke="#555"/>
      <path d="M107.8 28.1 H130.8 M119.3 17.4 V38.8" stroke-width="4.6" stroke-linecap="butt"/>
    </svg>
  </div>
  <!-- tabs -->
  <div class="abs" style="left:42px;top:342px;width:1048px;height:68px;border-left:2px solid #b9b9b9">
    <div class="tab" style="left:0;width:209px;color:#d9dbe0;padding-left:21px">Flow 1</div>
    <div class="abs" style="left:207.5px;top:0;width:211px;height:68px;border-radius:5px;box-shadow:0 0 10px 6px rgba(147,60,232,.85),0 0 24px 12px rgba(147,60,232,.32)"></div>
    <div class="tab" style="left:419px;width:210px;padding-left:21px;letter-spacing:.25px">Checksum Flow</div>
    <div class="tab" style="left:629px;width:209.2px;padding-left:21px">Flow 4</div>
    <div class="tab" style="left:838.2px;width:206.7px;padding-left:42.4px;letter-spacing:.3px">Divide Subflow
      <svg style="left:10.2px;top:24.4px;width:18.7px;height:22.4px" viewBox="0 0 20 24"><rect x="1" y="1" width="18" height="22" rx="2" fill="none" stroke="#8b8f97" stroke-width="1.6"/><rect x="10" y="5" width="6.5" height="5" fill="none" stroke="#8b8f97" stroke-width="1.4"/><rect x="3.5" y="14" width="6.5" height="5" fill="none" stroke="#8b8f97" stroke-width="1.4"/><path d="M1 7.5H10M16.5 7.5H19M10 16.5H19" stroke="#8b8f97" stroke-width="1.4" fill="none"/></svg></div>
    <div class="abs b" style="left:207.5px;top:0;width:211px;height:69px;background:#fff;border:2px solid #bdbdbd;border-bottom:none;border-radius:5px 5px 3px 3px;font-size:24px;line-height:68px;padding-left:20px;color:#1f2937;white-space:nowrap;padding-top:2.5px">Division Flow</div>
  </div>

  <!-- divider + diff -->
  <div class="abs" style="left:1545.5px;top:314.5px;width:2.6px;height:1135px;background:#eceef2"></div>
  <div class="abs" style="left:1548px;top:313.8px;width:1290px;height:44.5px;background:#f9fafb"></div>
  <svg style="left:1571px;top:330px;width:14px;height:12px" viewBox="0 0 14 12"><path d="M3 3.5 L7 7.5 L11 3.5" fill="none" stroke="#6b7280" stroke-width="1.5" stroke-linecap="round" stroke-linejoin="round"/></svg>
  <div class="t" style="left:1594px;top:324px;font-size:23px;letter-spacing:.15px;color:#6b7280">property <b style="color:#374151">func</b></div>
  <div class="t" style="left:2700px;top:325.6px;width:117px;text-align:right;font-size:23.6px;color:#9ca3af">+2 -2</div>
  <div class="abs" style="left:1548px;top:0;width:1290px;height:1px">
    <div class="row" style="top:357.60px;height:35.24px;background:#fef2f2"><div class="n1" style="background:#fee2e2;border-right-color:#fbd5d5"></div><div class="n2" style="background:#fee2e2;border-right-color:#fbd5d5"></div><div class="num" style="left:0;width:71px;color:#dc2626">1</div><div class="num" style="left:83px;width:71px;color:#dc2626"></div><div class="code" style="color:#991b1b">−// Get the payload from the incoming message</div></div>
    <div class="row" style="top:392.54px;height:35.24px;background:#ecfdf5"><div class="n1" style="background:#d1fae5;border-right-color:#b6f0d3"></div><div class="n2" style="background:#d1fae5;border-right-color:#b6f0d3"></div><div class="num" style="left:0;width:71px;color:#059669"></div><div class="num" style="left:83px;width:71px;color:#059669">1</div><div class="code" style="color:#065f46">+// Get the payload from the incoming message and save it to a variable</div></div>
    <div class="row" style="top:427.48px;height:35.24px;background:#ffffff"><div class="n1" style="background:#f9fafb;border-right-color:#eceef2"></div><div class="n2" style="background:#f9fafb;border-right-color:#eceef2"></div><div class="num" style="left:0;width:71px;color:#9ca3af">2</div><div class="num" style="left:83px;width:71px;color:#9ca3af">2</div><div class="code" style="color:#9ca3af"> const payload = msg.payload;</div></div>
    <div class="row" style="top:462.42px;height:35.24px;background:#ffffff"><div class="n1" style="background:#f9fafb;border-right-color:#eceef2"></div><div class="n2" style="background:#f9fafb;border-right-color:#eceef2"></div><div class="num" style="left:0;width:71px;color:#9ca3af">3</div><div class="num" style="left:83px;width:71px;color:#9ca3af">3</div><div class="code" style="color:#9ca3af"></div></div>
    <div class="row" style="top:497.36px;height:35.24px;background:#ffffff"><div class="n1" style="background:#f9fafb;border-right-color:#eceef2"></div><div class="n2" style="background:#f9fafb;border-right-color:#eceef2"></div><div class="num" style="left:0;width:71px;color:#9ca3af">4</div><div class="num" style="left:83px;width:71px;color:#9ca3af">4</div><div class="code" style="color:#9ca3af"> // Convert payload to string if it is not already a string</div></div>
    <div class="row" style="top:532.30px;height:35.24px;background:#ffffff"><div class="n1" style="background:#f9fafb;border-right-color:#eceef2"></div><div class="n2" style="background:#f9fafb;border-right-color:#eceef2"></div><div class="num" style="left:0;width:71px;color:#9ca3af">5</div><div class="num" style="left:83px;width:71px;color:#9ca3af">5</div><div class="code" style="color:#9ca3af"> const str = typeof payload === 'string' ? payload : JSON.stringify(payload);</div></div>
    <div class="row" style="top:567.24px;height:35.24px;background:#ffffff"><div class="n1" style="background:#f9fafb;border-right-color:#eceef2"></div><div class="n2" style="background:#f9fafb;border-right-color:#eceef2"></div><div class="num" style="left:0;width:71px;color:#9ca3af">6</div><div class="num" style="left:83px;width:71px;color:#9ca3af">6</div><div class="code" style="color:#9ca3af"></div></div>
    <div class="row" style="top:602.18px;height:35.24px;background:#fef2f2"><div class="n1" style="background:#fee2e2;border-right-color:#fbd5d5"></div><div class="n2" style="background:#fee2e2;border-right-color:#fbd5d5"></div><div class="num" style="left:0;width:71px;color:#dc2626">7</div><div class="num" style="left:83px;width:71px;color:#dc2626"></div><div class="code" style="color:#991b1b">−// Use regex to find all numbers (including decimals and negatives) in the string</div></div>
    <div class="row" style="top:637.12px;height:35.24px;background:#ecfdf5"><div class="n1" style="background:#d1fae5;border-right-color:#b6f0d3"></div><div class="n2" style="background:#d1fae5;border-right-color:#b6f0d3"></div><div class="num" style="left:0;width:71px;color:#059669"></div><div class="num" style="left:83px;width:71px;color:#059669">7</div><div class="code" style="color:#065f46">+// Use regex to find all numbers, including decimals and negatives, in the string</div></div>
    <div class="row" style="top:672.06px;height:35.24px;background:#ffffff"><div class="n1" style="background:#f9fafb;border-right-color:#eceef2"></div><div class="n2" style="background:#f9fafb;border-right-color:#eceef2"></div><div class="num" style="left:0;width:71px;color:#9ca3af">8</div><div class="num" style="left:83px;width:71px;color:#9ca3af">8</div><div class="code" style="color:#9ca3af"> const numbers = str.match(/−?\d+(\.\d+)?/g);</div></div>
    <div class="row" style="top:707.00px;height:35.24px;background:#ffffff"><div class="n1" style="background:#f9fafb;border-right-color:#eceef2"></div><div class="n2" style="background:#f9fafb;border-right-color:#eceef2"></div><div class="num" style="left:0;width:71px;color:#9ca3af">9</div><div class="num" style="left:83px;width:71px;color:#9ca3af">9</div><div class="code" style="color:#9ca3af"></div></div>
    <div class="row" style="top:741.94px;height:35.24px;background:#ffffff"><div class="n1" style="background:#f9fafb;border-right-color:#eceef2"></div><div class="n2" style="background:#f9fafb;border-right-color:#eceef2"></div><div class="num" style="left:0;width:71px;color:#9ca3af">10</div><div class="num" style="left:83px;width:71px;color:#9ca3af">10</div><div class="code" style="color:#9ca3af"> // If no numbers found or only one number, set payload to 0 and return</div></div>
    <div class="row" style="top:776.88px;height:35.74px;background:#eff6ff"><div class="n1" style="border-right-color:#bfdbfe"></div><div class="n2" style="border-right-color:#bfdbfe"></div><div class="code" style="left:167px;width:1123px;text-align:center;color:#2563eb">↕ 13 unchanged lines</div></div>
  </div>
  <div class="abs" style="left:1548px;top:813.5px;width:1290px;height:47.4px;background:#f9fafb;border-top:2px solid #e5e7eb;border-bottom:2px solid #e5e7eb"></div>
  <svg style="left:1572px;top:829px;width:12px;height:14px" viewBox="0 0 12 14"><path d="M4 3 L8 7 L4 11" fill="none" stroke="#6b7280" stroke-width="1.5" stroke-linecap="round" stroke-linejoin="round"/></svg>
  <div class="t" style="left:1594px;top:826px;font-size:23px;letter-spacing:.15px;color:#6b7280">property <b style="color:#374151">timeout</b></div>

  <!-- close -->
  <div class="abs" style="left:2709px;top:1510px;width:135px;height:68px;background:#3730a3;border-radius:12px"></div>
  <div class="t b" style="left:2709px;top:1532.3px;width:135px;text-align:center;font-size:24.5px;color:#fff">Close</div>
</div>
</div>
<!-- mouse cursor -->
<svg style="left:2000px;top:350px;width:40px;height:50px;filter:drop-shadow(0 1.2px 1.6px rgba(0,0,0,.38))" viewBox="0 0 40 50"><path d="M10.3 8.2 L10.3 29.4 L15.6 25.9 L20.3 36.6 L23.4 35.4 L19.4 25.3 L25.8 24.4 Z" fill="#fff" stroke="#fff" stroke-width="5.6" stroke-linejoin="round"/><path d="M10.3 8.2 L10.3 29.4 L15.6 25.9 L20.3 36.6 L23.4 35.4 L19.4 25.3 L25.8 24.4 Z" fill="#000" stroke="#000" stroke-width="1.5" stroke-linejoin="round"/></svg>
</div></body>
</html>
